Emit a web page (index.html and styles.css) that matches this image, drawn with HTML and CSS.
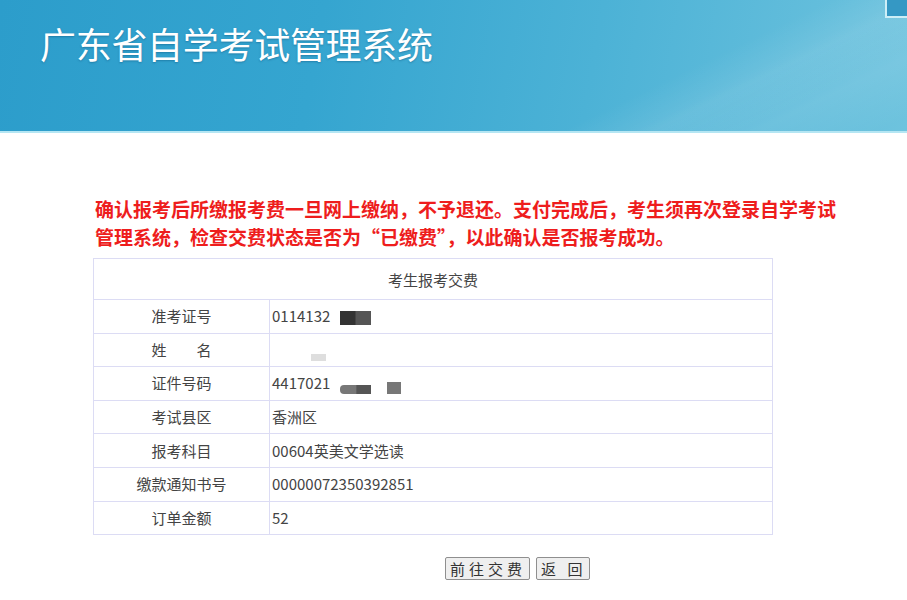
FILE: index.html
```html
<!DOCTYPE html>
<html lang="zh-CN">
<head>
    <meta charset="UTF-8">
    <meta name="viewport" content="width=device-width, initial-scale=1.0">
    <title>广东省自学考试管理系统</title>
    <link rel="stylesheet" href="styles.css">
</head>
<body>
    <!-- 顶部横幅 -->
    <div class="header">
        <div class="streak streak-a"></div>
        <div class="streak streak-b"></div>
        <h1 class="title">广东省自学考试管理系统</h1>
        <div class="corner"></div>
    </div>

    <!-- 主体 -->
    <div class="main">
        <p class="notice">确认报考后所缴报考费一旦网上缴纳，不予退还。支付完成后，考生须再次登录自学考试管理系统，检查交费状态是否为“已缴费”，以此确认是否报考成功。</p>

        <table class="pay-table">
            <tr>
                <th colspan="2">考生报考交费</th>
            </tr>
            <tr>
                <td class="label">准考证号</td>
                <td class="value">0114132 <span class="mask mask-dark"></span></td>
            </tr>
            <tr>
                <td class="label">姓&emsp;&emsp;名</td>
                <td class="value"><span class="mask mask-light"></span></td>
            </tr>
            <tr>
                <td class="label">证件号码</td>
                <td class="value">4417021 <span class="mask mask-mid"></span><span class="mask mask-small"></span></td>
            </tr>
            <tr>
                <td class="label">考试县区</td>
                <td class="value">香洲区</td>
            </tr>
            <tr>
                <td class="label">报考科目</td>
                <td class="value">00604英美文学选读</td>
            </tr>
            <tr>
                <td class="label">缴款通知书号</td>
                <td class="value">00000072350392851</td>
            </tr>
            <tr>
                <td class="label">订单金额</td>
                <td class="value">52</td>
            </tr>
        </table>

        <div class="actions">
            <button class="btn">前往交费</button>
            <button class="btn">返 回</button>
        </div>
    </div>
</body>
</html>
```

FILE: styles.css
```css
* {
    margin: 0;
    padding: 0;
    box-sizing: border-box;
}

body {
    font-family: "Noto Sans CJK SC", "Noto Sans", sans-serif;
    background: #fff;
    color: #444;
    overflow: hidden;
}

/* 顶部横幅 */
.header {
    position: relative;
    height: 133px;
    overflow: hidden;
    background: linear-gradient(100deg, #2c9dcb 0%, #35a5d0 35%, #4cb2d6 65%, #6ec3de 100%);
    border-bottom: 2px solid #b5e6f3;
}

.streak {
    position: absolute;
    background: linear-gradient(180deg, rgba(255, 255, 255, 0) 0%, rgba(255, 255, 255, 0.09) 50%, rgba(255, 255, 255, 0) 100%);
    transform: rotate(-26deg);
}

.streak-a {
    width: 1000px;
    height: 110px;
    left: 330px;
    top: 40px;
}

.streak-b {
    width: 800px;
    height: 80px;
    left: 480px;
    top: -20px;
}

.title {
    position: relative;
    padding: 21px 0 0 40px;
    font-size: 36px;
    font-weight: normal;
    line-height: 44px;
    color: #fff;
    letter-spacing: -0.3px;
    text-shadow: 0 1px 2px rgba(0, 60, 100, 0.35);
}

.corner {
    position: absolute;
    top: -2px;
    right: -2px;
    width: 24px;
    height: 20px;
    background: #3598c4;
    border: 2px solid #cdeef7;
}

/* 主体 */
.main {
    padding: 62px 0 0 93px;
}

.notice {
    width: 752px;
    padding-left: 2px;
    font-size: 19px;
    font-weight: bold;
    line-height: 28px;
    color: #ee1d1d;
}

.pay-table {
    margin-top: 7px;
    width: 680px;
    border-collapse: collapse;
    font-size: 15px;
}

.pay-table th,
.pay-table td {
    border: 1px solid #dcdcf4;
}

.pay-table th {
    height: 41px;
    font-weight: normal;
    font-size: 15px;
    color: #444;
}

.pay-table td {
    height: 33.6px;
    padding: 0;
    line-height: 20px;
}

.label {
    width: 176px;
    text-align: center;
}

.value {
    padding-left: 2px !important;
    color: #444;
}

.mask {
    display: inline-block;
    vertical-align: middle;
}

.mask-dark {
    width: 31px;
    height: 14px;
    margin-left: 6px;
    background: linear-gradient(90deg, #333 0%, #333 48%, #555 52%, #555 100%);
}

.mask-light {
    width: 15px;
    height: 7px;
    margin: 12px 0 0 39px;
    background: #dedede;
}

.mask-mid {
    width: 31px;
    height: 9px;
    margin: 10px 0 0 6px;
    background: linear-gradient(90deg, #777 0%, #777 50%, #555 55%, #555 100%);
    border-radius: 4px 0 0 4px;
}

.mask-small {
    width: 14px;
    height: 12px;
    margin: 8px 0 0 16px;
    background: #777;
}

.actions {
    display: flex;
    gap: 6px;
    padding: 22px 0 0 352px;
}

.btn {
    height: 23px;
    padding: 0 3px 0 4px;
    font-family: "Noto Sans CJK SC", sans-serif;
    font-size: 15px;
    line-height: 21px;
    letter-spacing: 4px;
    color: #333;
    background: #efefef;
    border: 1px solid #8f8f8f;
    border-radius: 2px;
}
```
